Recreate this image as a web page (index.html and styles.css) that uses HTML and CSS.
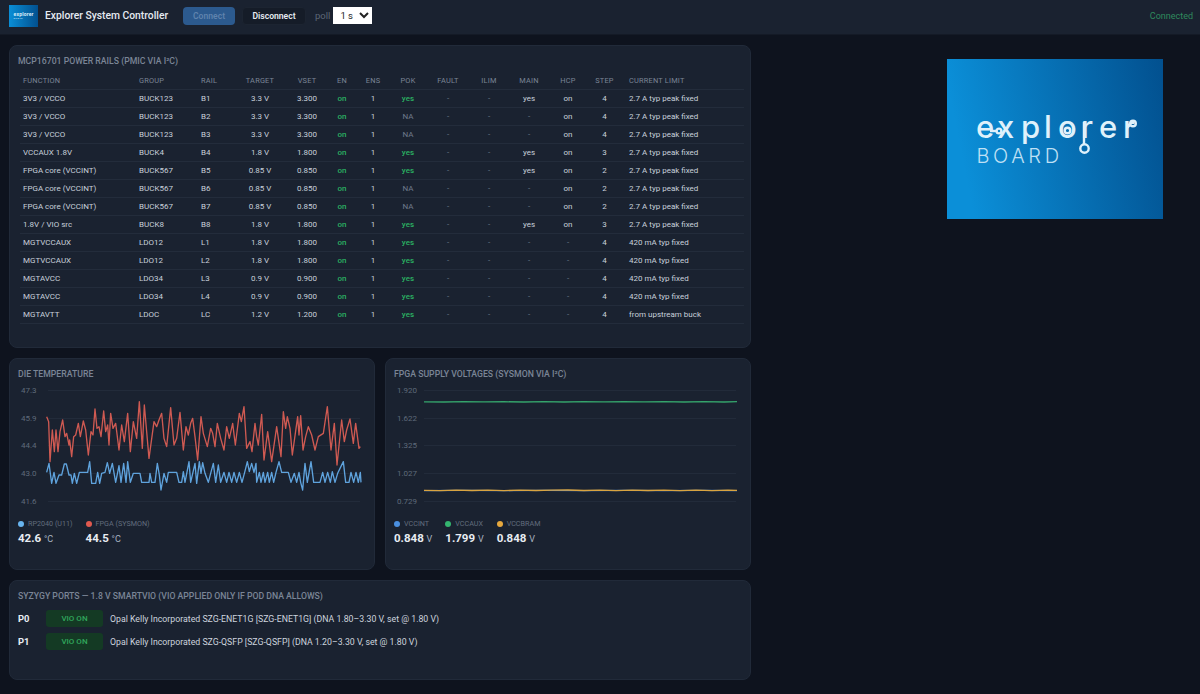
FILE: index.html
```html
<!DOCTYPE html>
<html lang="en">
<head>
<meta charset="utf-8">
<title>Explorer System Controller</title>
<link rel="stylesheet" href="styles.css">
</head>
<body>
<header class="topbar">
  <svg class="mini-logo" viewBox="0 0 29 22" aria-hidden="true">
    <defs><linearGradient id="miniGrad" x1="0" x2="1"><stop offset="0" stop-color="#0a8ed6"/><stop offset="1" stop-color="#02508f"/></linearGradient></defs>
    <rect width="29" height="22" fill="url(#miniGrad)"/>
    <text x="4.5" y="10.5" class="mini-word">explorer</text>
    <text x="4.5" y="14" class="mini-sub">BOARD</text>
  </svg>
  <h1 class="app-title">Explorer System Controller</h1>
  <button class="btn btn-connect" type="button">Connect</button>
  <button class="btn btn-disconnect" type="button">Disconnect</button>
  <span class="poll-label">poll</span>
  <select class="poll-select"><option>1 s</option></select>
  <span class="status">Connected</span>
</header>

<main class="layout">
  <div class="left-col">
    <section class="card rails">
      <h2 class="card-title">MCP16701 power rails (PMIC via I²C)</h2>
      <table class="rail-table">
        <colgroup>
          <col class="c-func"><col class="c-group"><col class="c-rail"><col class="c-target"><col class="c-vset"><col class="c-en"><col class="c-ens"><col class="c-pok"><col class="c-fault"><col class="c-ilim"><col class="c-main"><col class="c-hcp"><col class="c-step"><col class="c-limit">
        </colgroup>
        <thead>
          <tr><th class="l">Function</th><th class="l">Group</th><th class="l">Rail</th><th>Target</th><th>VSET</th><th>EN</th><th>ENS</th><th>POK</th><th>Fault</th><th>ILIM</th><th>Main</th><th>HCP</th><th>Step</th><th class="l lim">Current limit</th></tr>
        </thead>
        <tbody>
          <tr><td class="l">3V3 / VCCO</td><td class="l">BUCK123</td><td class="l">B1</td><td>3.3 V</td><td>3.300</td><td class="ok">on</td><td>1</td><td class="ok">yes</td><td class="dim">-</td><td class="dim">-</td><td>yes</td><td>on</td><td>4</td><td class="l lim">2.7 A typ peak fixed</td></tr>
          <tr><td class="l">3V3 / VCCO</td><td class="l">BUCK123</td><td class="l">B2</td><td>3.3 V</td><td>3.300</td><td class="ok">on</td><td>1</td><td class="dim">NA</td><td class="dim">-</td><td class="dim">-</td><td class="dim">-</td><td>on</td><td>4</td><td class="l lim">2.7 A typ peak fixed</td></tr>
          <tr><td class="l">3V3 / VCCO</td><td class="l">BUCK123</td><td class="l">B3</td><td>3.3 V</td><td>3.300</td><td class="ok">on</td><td>1</td><td class="dim">NA</td><td class="dim">-</td><td class="dim">-</td><td class="dim">-</td><td>on</td><td>4</td><td class="l lim">2.7 A typ peak fixed</td></tr>
          <tr><td class="l">VCCAUX 1.8V</td><td class="l">BUCK4</td><td class="l">B4</td><td>1.8 V</td><td>1.800</td><td class="ok">on</td><td>1</td><td class="ok">yes</td><td class="dim">-</td><td class="dim">-</td><td>yes</td><td>on</td><td>3</td><td class="l lim">2.7 A typ peak fixed</td></tr>
          <tr><td class="l">FPGA core (VCCINT)</td><td class="l">BUCK567</td><td class="l">B5</td><td>0.85 V</td><td>0.850</td><td class="ok">on</td><td>1</td><td class="ok">yes</td><td class="dim">-</td><td class="dim">-</td><td>yes</td><td>on</td><td>2</td><td class="l lim">2.7 A typ peak fixed</td></tr>
          <tr><td class="l">FPGA core (VCCINT)</td><td class="l">BUCK567</td><td class="l">B6</td><td>0.85 V</td><td>0.850</td><td class="ok">on</td><td>1</td><td class="dim">NA</td><td class="dim">-</td><td class="dim">-</td><td class="dim">-</td><td>on</td><td>2</td><td class="l lim">2.7 A typ peak fixed</td></tr>
          <tr><td class="l">FPGA core (VCCINT)</td><td class="l">BUCK567</td><td class="l">B7</td><td>0.85 V</td><td>0.850</td><td class="ok">on</td><td>1</td><td class="dim">NA</td><td class="dim">-</td><td class="dim">-</td><td class="dim">-</td><td>on</td><td>2</td><td class="l lim">2.7 A typ peak fixed</td></tr>
          <tr><td class="l">1.8V / VIO src</td><td class="l">BUCK8</td><td class="l">B8</td><td>1.8 V</td><td>1.800</td><td class="ok">on</td><td>1</td><td class="ok">yes</td><td class="dim">-</td><td class="dim">-</td><td>yes</td><td>on</td><td>3</td><td class="l lim">2.7 A typ peak fixed</td></tr>
          <tr><td class="l">MGTVCCAUX</td><td class="l">LDO12</td><td class="l">L1</td><td>1.8 V</td><td>1.800</td><td class="ok">on</td><td>1</td><td class="ok">yes</td><td class="dim">-</td><td class="dim">-</td><td class="dim">-</td><td class="dim">-</td><td>4</td><td class="l lim">420 mA typ fixed</td></tr>
          <tr><td class="l">MGTVCCAUX</td><td class="l">LDO12</td><td class="l">L2</td><td>1.8 V</td><td>1.800</td><td class="ok">on</td><td>1</td><td class="ok">yes</td><td class="dim">-</td><td class="dim">-</td><td class="dim">-</td><td class="dim">-</td><td>4</td><td class="l lim">420 mA typ fixed</td></tr>
          <tr><td class="l">MGTAVCC</td><td class="l">LDO34</td><td class="l">L3</td><td>0.9 V</td><td>0.900</td><td class="ok">on</td><td>1</td><td class="ok">yes</td><td class="dim">-</td><td class="dim">-</td><td class="dim">-</td><td class="dim">-</td><td>4</td><td class="l lim">420 mA typ fixed</td></tr>
          <tr><td class="l">MGTAVCC</td><td class="l">LDO34</td><td class="l">L4</td><td>0.9 V</td><td>0.900</td><td class="ok">on</td><td>1</td><td class="ok">yes</td><td class="dim">-</td><td class="dim">-</td><td class="dim">-</td><td class="dim">-</td><td>4</td><td class="l lim">420 mA typ fixed</td></tr>
          <tr><td class="l">MGTAVTT</td><td class="l">LDOC</td><td class="l">LC</td><td>1.2 V</td><td>1.200</td><td class="ok">on</td><td>1</td><td class="ok">yes</td><td class="dim">-</td><td class="dim">-</td><td class="dim">-</td><td class="dim">-</td><td>4</td><td class="l lim">from upstream buck</td></tr>
        </tbody>
      </table>
    </section>

    <div class="chart-row">
      <section class="card chart-card">
        <h2 class="card-title">Die temperature</h2>
        <svg class="chart" viewBox="18 385 348 120" aria-hidden="true">
          <g class="grid">
            <line x1="48" x2="360" y1="390.5" y2="390.5"/><line x1="48" x2="360" y1="418.5" y2="418.5"/><line x1="48" x2="360" y1="445.5" y2="445.5"/><line x1="48" x2="360" y1="473.5" y2="473.5"/><line x1="48" x2="360" y1="501.5" y2="501.5"/>
          </g>
          <g class="axis">
            <text x="21" y="393">47.3</text><text x="21" y="421">45.9</text><text x="21" y="448">44.4</text><text x="21" y="476">43.0</text><text x="21" y="504">41.6</text>
          </g>
          <g transform="translate(45 395) scale(.33333)">
            <polyline class="trace t-red" points="5,65 11,80 15,200 22,105 28,170 33,105 39,170 45,110 53,75 60,125 65,115 72,150 74,135 80,185 86,125 92,120 100,85 106,125 115,78 122,105 130,180 138,110 144,120 150,42 156,100 162,95 168,125 176,48 182,110 188,90 192,150 197,55 204,100 212,85 222,165 230,90 238,140 248,55 256,170 265,80 275,130 283,20 292,160 298,30 312,190 327,80 335,95 342,75 350,55 357,130 365,155 377,38 387,150 395,130 405,52 415,165 423,95 430,120 437,85 443,70 450,125 458,195 468,65 475,115 487,155 497,100 503,115 510,155 517,85 527,130 537,165 545,95 553,130 563,85 571,150 583,55 589,80 597,35 605,160 615,140 621,170 630,85 635,125 640,150 650,58 657,195 668,110 680,200 695,95 708,185 715,50 722,100 727,65 735,100 742,180 758,65 762,120 767,62 774,165 782,125 790,95 800,120 810,165 820,125 835,115 847,35 858,165 868,85 876,210 890,75 898,140 905,105 915,72 925,145 932,85 942,160 946,155"/>
            <polyline class="trace t-blue" points="5,232 12,205 20,265 27,232 33,265 42,240 50,240 58,207 64,207 72,240 78,240 82,265 88,235 95,265 103,232 128,232 134,200 140,265 152,265 158,232 164,265 170,235 180,232 187,203 194,235 202,205 212,262 222,212 228,262 236,205 243,262 248,200 256,262 265,235 285,235 290,262 312,262 315,235 320,262 330,262 337,205 343,240 348,285 357,235 365,262 370,232 395,232 402,262 410,262 415,230 420,262 432,200 437,262 450,205 455,265 463,200 468,235 473,203 480,235 490,262 497,235 505,205 512,262 520,210 527,262 537,232 545,262 552,232 560,262 567,232 575,262 583,232 591,262 599,232 607,200 613,230 620,205 627,232 633,205 635,262 643,232 648,262 655,232 660,262 668,232 673,262 680,232 686,262 693,232 702,200 710,232 730,232 738,262 748,235 755,262 762,232 767,262 773,285 780,205 787,262 798,200 806,262 825,262 833,232 840,262 848,232 856,262 862,230 870,262 878,235 895,200 902,262 912,262 918,232 926,262 933,232 940,262 946,232 948,262"/>
          </g>
        </svg>
        <div class="readouts">
          <div class="readout">
            <div class="legend"><span class="dot d-blue"></span>RP2040 (U11)</div>
            <div class="value">42.6 <small>°C</small></div>
          </div>
          <div class="readout">
            <div class="legend"><span class="dot d-red"></span>FPGA (SYSMON)</div>
            <div class="value">44.5 <small>°C</small></div>
          </div>
        </div>
      </section>

      <section class="card chart-card">
        <h2 class="card-title">FPGA supply voltages (SYSMON via I²C)</h2>
        <svg class="chart" viewBox="394 385 348 120" aria-hidden="true">
          <g class="grid">
            <line x1="424" x2="736" y1="390.5" y2="390.5"/><line x1="424" x2="736" y1="418.5" y2="418.5"/><line x1="424" x2="736" y1="445.5" y2="445.5"/><line x1="424" x2="736" y1="473.5" y2="473.5"/><line x1="424" x2="736" y1="501.5" y2="501.5"/>
          </g>
          <g class="axis">
            <text x="397" y="393">1.920</text><text x="397" y="421">1.622</text><text x="397" y="448">1.325</text><text x="397" y="476">1.027</text><text x="397" y="504">0.729</text>
          </g>
          <polyline class="trace t-green" points="424,401.8 444,402 464,401.6 484,401.9 504,401.7 524,402 544,401.6 564,402 584,401.7 604,401.9 624,401.6 644,401.9 664,401.7 684,402 704,401.7 724,402 737,401.7"/>
          <polyline class="trace t-steel" points="424,490.6 464,490.4 504,490.7 544,490.4 584,490.6 624,490.4 664,490.7 704,490.4 737,490.6"/>
          <polyline class="trace t-amber" points="424,490.3 440,490.6 456,490.1 472,490.5 488,490.2 504,490.6 520,490.1 536,490.5 552,490.2 568,490 584,490.5 600,490.2 616,490.6 632,490.2 648,490.5 664,490.1 680,490.6 696,490.2 712,490.6 728,490.2 737,490.4"/>
        </svg>
        <div class="readouts">
          <div class="readout">
            <div class="legend"><span class="dot d-steel"></span>VCCINT</div>
            <div class="value">0.848 <small>V</small></div>
          </div>
          <div class="readout">
            <div class="legend"><span class="dot d-green"></span>VCCAUX</div>
            <div class="value">1.799 <small>V</small></div>
          </div>
          <div class="readout">
            <div class="legend"><span class="dot d-amber"></span>VCCBRAM</div>
            <div class="value">0.848 <small>V</small></div>
          </div>
        </div>
      </section>
    </div>

    <section class="card ports">
      <h2 class="card-title">SYZYGY ports — 1.8 V SmartVIO (VIO applied only if pod DNA allows)</h2>
      <div class="port-row"><b class="port-id">P0</b><span class="badge">VIO ON</span><span class="port-text">Opal Kelly Incorporated SZG-ENET1G [SZG-ENET1G] (DNA 1.80–3.30 V, set @ 1.80 V)</span></div>
      <div class="port-row"><b class="port-id">P1</b><span class="badge">VIO ON</span><span class="port-text">Opal Kelly Incorporated SZG-QSFP [SZG-QSFP] (DNA 1.20–3.30 V, set @ 1.80 V)</span></div>
    </section>
  </div>

  <aside class="brand">
    <svg class="brand-logo" viewBox="947 59 216 160" role="img" aria-label="explorer BOARD">
      <defs><linearGradient id="brandGrad" x1="0" x2="1" y1=".15" y2=".0"><stop offset="0" stop-color="#0b8fd8"/><stop offset="1" stop-color="#02508f"/></linearGradient></defs>
      <rect x="947" y="59" width="216" height="160" fill="url(#brandGrad)"/>
      <text class="brand-word" y="138" x="976 997 1021 1044 1058 1081 1099 1123">explorer</text>
      <text class="brand-sub" x="976.5" y="163">BOARD</text>
      <g class="brand-marks">
        <line x1="990" y1="131" x2="996" y2="131"/>
        <circle cx="999" cy="131" r="2.4"/>
        <circle cx="1067.5" cy="130.5" r="2.8"/>
        <line x1="1084" y1="122" x2="1084" y2="144"/>
        <circle cx="1084.5" cy="148.5" r="4.2"/>
        <line x1="1127" y1="128" x2="1130" y2="125"/>
        <circle cx="1133" cy="123.5" r="2.8"/>
      </g>
    </svg>
  </aside>
</main>
</body>
</html>
```
FILE: styles.css
```css
* { box-sizing: border-box; }
html, body { margin: 0; height: 100%; }
body {
  background: #0e131e;
  color: #c8d0db;
  font-family: Roboto, "Open Sans", sans-serif;
  font-size: 8px;
  overflow: hidden;
}

/* top bar */
.topbar {
  height: 35px;
  display: flex;
  align-items: center;
  padding: 0 7px 3px 9px;
  background: #1a2230;
  border-bottom: 1px solid #141a26;
}
.mini-logo { width: 29px; height: 22px; flex: none; }
.mini-word { font-size: 5px; fill: #d6ecf9; font-weight: 700; letter-spacing: .2px; }
.mini-sub { font-size: 2.5px; fill: #b8ddf3; letter-spacing: .3px; }
.app-title {
  margin: 0 15px 0 7px;
  width: 123px;
  font-size: 10.3px;
  font-weight: 500;
  white-space: nowrap;
  color: #e6ebf2;
}
.btn {
  height: 18px;
  padding: 0;
  font: 600 8.6px Roboto, sans-serif;
  border-radius: 4px;
  border: 1px solid transparent;
}
.btn-connect { width: 52px; margin-right: 7px; background: #2c5a8e; color: #5f83ad; }
.btn-disconnect { width: 64px; background: #151c28; border-color: #1c2431; color: #e6ebf2; }
.poll-label { margin: 0 3px 0 9px; font-size: 9.5px; color: #5d6777; }
.poll-select {
  width: 39px;
  height: 17px;
  padding: 0 0 0 3px;
  border: 0;
  border-radius: 0;
  background: #fff;
  color: #222;
  font: 9.5px Roboto, sans-serif;
}
.status { margin-left: auto; font-size: 9px; color: #2f8a5d; }

/* page layout */
.layout {
  display: grid;
  grid-template-columns: 742px 1fr;
  padding: 10px 0 0 9px;
}
.left-col { display: flex; flex-direction: column; gap: 10px; }
.card {
  background: #1a2230;
  border: 1px solid #212a39;
  border-radius: 8px;
  padding: 9px 8px;
}
.card-title {
  margin: 0;
  font-size: 8.7px;
  line-height: 12px;
  font-weight: 500;
  letter-spacing: 0;
  text-transform: uppercase;
  color: #7a8596;
}

/* rails table */
.rails { height: 303px; }
.rail-table {
  table-layout: fixed;
  width: 724px;
  margin: 6px 0 0 2px;
  border-collapse: collapse;
}
.c-func { width: 116px; } .c-group { width: 62px; } .c-rail { width: 36px; }
.c-target { width: 52px; } .c-vset { width: 42px; } .c-en { width: 28px; }
.c-ens { width: 34px; } .c-pok { width: 36px; } .c-fault { width: 44px; }
.c-ilim { width: 38px; } .c-main { width: 42px; } .c-hcp { width: 36px; }
.c-step { width: 37px; } .c-limit { width: 121px; }
.rail-table th, .rail-table td {
  height: 18px;
  padding: 0;
  text-align: center;
  white-space: nowrap;
  overflow: hidden;
  border-bottom: 1px solid #232c3b;
}
.rail-table th {
  font-size: 7.4px;
  font-weight: 400;
  letter-spacing: .2px;
  text-transform: uppercase;
  color: #7a8596;
}
.rail-table thead th { height: 16px; }
.rail-table .l { text-align: left; padding-left: 3px; }
.rail-table .lim { padding-left: 6px; }
.rail-table .ok { color: #2bb163; font-weight: 500; }
.rail-table .dim { color: #6f7a8b; }

/* charts */
.chart-row { display: grid; grid-template-columns: 366px 366px; gap: 10px; }
.chart-card { height: 212px; }
.chart { display: block; width: 348px; height: 120px; margin: 5px 0 0; }
.grid line { stroke: #222b3a; stroke-width: 1; }
.axis text { font-size: 8px; fill: #5f6a7a; }
.trace { fill: none; stroke-linejoin: round; }
.t-red { stroke: #cf5a52; stroke-width: 4; }
.t-blue { stroke: #5fa3dd; stroke-width: 4; }
.t-green { stroke: #35a36b; stroke-width: 1.3; }
.t-steel { stroke: #4a85d0; stroke-width: 1.2; }
.t-amber { stroke: #d9a441; stroke-width: 1.3; }
.readouts { display: flex; gap: 13px; margin-top: 12px; }
.legend {
  display: flex;
  align-items: center;
  gap: 4px;
  height: 13px;
  font-size: 7.2px;
  color: #626d7e;
  white-space: nowrap;
}
.dot { width: 6px; height: 6px; border-radius: 50%; }
.d-blue { background: #68b4ee; }
.d-red { background: #e0594f; }
.d-steel { background: #4a8fe0; }
.d-green { background: #34b56f; }
.d-amber { background: #e6a83e; }
.value {
  font-size: 11.5px;
  line-height: 16px;
  font-weight: 700;
  color: #e8edf3;
  white-space: nowrap;
}
.value small { font-size: 9px; font-weight: 400; color: #a9b3c0; }

/* SYZYGY */
.ports { height: 100px; }
.port-row {
  display: flex;
  align-items: center;
  height: 17px;
  margin-top: 6px;
  font-size: 8.75px;
}
.ports .card-title + .port-row { margin-top: 8px; }
.port-id { width: 28px; font-size: 9.4px; color: #e8edf3; }
.badge {
  width: 57px;
  height: 17px;
  margin-right: 7px;
  border-radius: 3px;
  background: #143a24;
  color: #31a85d;
  font-size: 8px;
  font-weight: 500;
  line-height: 17px;
  text-align: center;
}
.port-text { white-space: nowrap; color: #cdd4de; }

/* brand */
.brand { padding: 14px 0 0 196px; }
.brand-logo { display: block; width: 216px; height: 160px; }
.brand-word {
  font-family: Inter, "Open Sans", sans-serif;
  font-size: 31px;
  font-weight: 500;
  fill: #dff1fb;
}
.brand-sub {
  font-family: Inter, "Open Sans", sans-serif;
  font-size: 20px;
  font-weight: 300;
  letter-spacing: 3.6px;
  fill: #bfe0f5;
}
.brand-marks line, .brand-marks circle { fill: none; stroke: #dff1fb; stroke-width: 2.4; }
```
